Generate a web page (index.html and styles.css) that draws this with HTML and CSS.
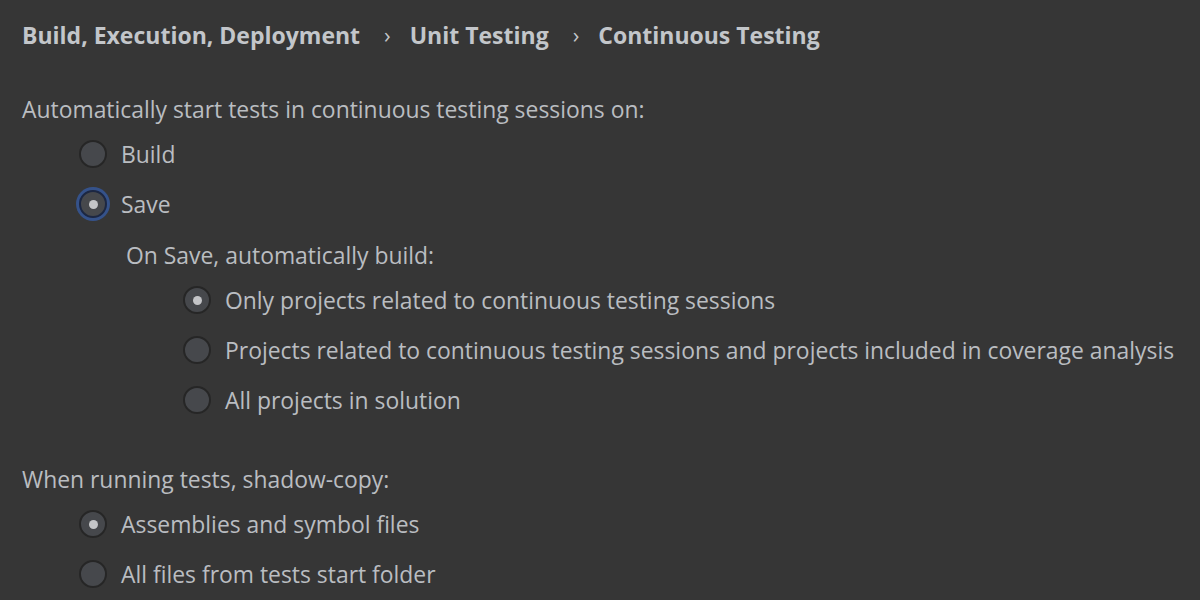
FILE: index.html
```html
<!DOCTYPE html>
<html lang="en">
<head>
    <meta charset="UTF-8">
    <title>Continuous Testing</title>
    <link rel="stylesheet" href="styles.css">
</head>
<body>
    <div class="breadcrumb">
        <span>Build, Execution, Deployment</span>
        <span class="sep">›</span>
        <span>Unit Testing</span>
        <span class="sep">›</span>
        <span>Continuous Testing</span>
    </div>

    <div class="label first">Automatically start tests in continuous testing sessions on:</div>
    <div class="group">
        <div class="option"><span class="radio"></span>Build</div>
        <div class="option"><span class="radio checked focused"></span>Save</div>
        <div class="label sub">On Save, automatically build:</div>
        <div class="group">
            <div class="option"><span class="radio checked"></span>Only projects related to continuous testing sessions</div>
            <div class="option"><span class="radio"></span>Projects related to continuous testing sessions and projects included in coverage analysis</div>
            <div class="option"><span class="radio"></span>All projects in solution</div>
        </div>
    </div>

    <div class="label second">When running tests, shadow-copy:</div>
    <div class="group">
        <div class="option"><span class="radio checked"></span>Assemblies and symbol files</div>
        <div class="option"><span class="radio"></span>All files from tests start folder</div>
    </div>
</body>
</html>
```

FILE: styles.css
```css
body {
    margin: 0;
    padding: 10px 0 0 22px;
    background: #363636;
    color: #babdc1;
    font-family: 'Open Sans', 'Noto Sans', sans-serif;
    font-size: 22.9px;
    overflow: hidden;
}

.breadcrumb {
    height: 50px;
    display: flex;
    align-items: center;
    font-size: 23px;
    font-weight: 700;
    color: #c3c6ca;
}

.breadcrumb .sep {
    font-weight: 400;
    font-size: 22px;
    margin: -3px 19px 0 24px;
}

.label {
    height: 40px;
    display: flex;
    align-items: center;
}

.label.first {
    margin-top: 29px;
}

.label.sub {
    margin-top: 6px;
    margin-left: 47px;
}

.label.second {
    margin-top: 34px;
}

.group {
    display: flex;
    flex-direction: column;
    margin-left: 57px;
}

.group .group {
    margin-left: 104px;
}

.option {
    height: 50px;
    display: flex;
    align-items: center;
    white-space: nowrap;
}

.radio {
    position: relative;
    box-sizing: border-box;
    width: 28px;
    height: 28px;
    margin-right: 14px;
    border-radius: 50%;
    background: #46484c;
    border: 2px solid #262626;
    flex-shrink: 0;
}

.radio.checked::after {
    content: '';
    position: absolute;
    left: 50%;
    top: 50%;
    width: 9px;
    height: 9px;
    margin: -4.5px 0 0 -4.5px;
    border-radius: 50%;
    background: #c4c5c8;
}

.radio.focused {
    border-color: #1c2742;
    box-shadow: 0 0 0 3px #35528a;
}
```
